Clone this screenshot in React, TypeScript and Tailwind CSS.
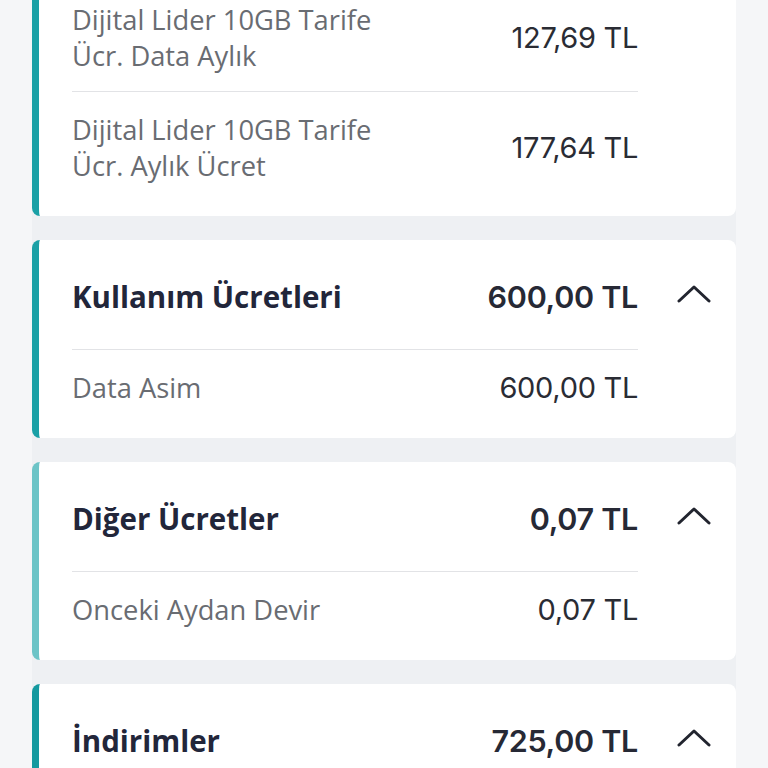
const sections = [
  {
    title: '',
    total: '',
    accent: 'border-[#1aa0a6]',
    items: [
      { label: ['Dijital Lider 10GB Tarife', 'Ücr. Data Aylık'], value: '127,69 TL' },
      { label: ['Dijital Lider 10GB Tarife', 'Ücr. Aylık Ücret'], value: '177,64 TL' },
    ],
  },
  {
    title: 'Kullanım Ücretleri',
    total: '600,00 TL',
    accent: 'border-[#1aa0a6]',
    items: [{ label: ['Data Asim'], value: '600,00 TL' }],
  },
  {
    title: 'Diğer Ücretler',
    total: '0,07 TL',
    accent: 'border-[#6cc4c7]',
    items: [{ label: ['Onceki Aydan Devir'], value: '0,07 TL' }],
  },
  {
    title: 'İndirimler',
    total: '725,00 TL',
    accent: 'border-[#14999f]',
    items: [],
  },
];

function ChevronUp() {
  return (
    <svg width="34" height="20" viewBox="0 0 34 20" fill="none">
      <polyline
        points="2,17 17,3 32,17"
        stroke="#22252f"
        strokeWidth="3"
        strokeLinecap="round"
        strokeLinejoin="round"
      />
    </svg>
  );
}

export default function App() {
  return (
    <div className="h-screen bg-[#f5f6f8] overflow-hidden">
      <div className="mx-[32px] bg-[#eef0f3] flex flex-col gap-[24px] mt-[-18px]">
        {sections.map((s, i) => (
          <div
            key={i}
            className={`bg-white rounded-[8px] border-l-[7px] ${s.accent} pb-[15px]`}
          >
            {s.title && (
              <div className="flex items-center pl-[33px] pt-[37px] pb-[32px]">
                <div className="flex w-[566px] items-center justify-between">
                  <span className="font-['Open_Sans',sans-serif] font-bold text-[29.5px] leading-[40px] text-[#22263a]">
                    {s.title}
                  </span>
                  <span className="font-['Inter',sans-serif] font-semibold text-[30.5px] leading-[40px] tracking-[-0.3px] text-[#262935]">
                    {s.total}
                  </span>
                </div>
                <div className="pl-[39px] pb-[6px]">
                  <ChevronUp />
                </div>
              </div>
            )}
            <div className="pl-[33px]">
              {s.items.map((it, j) => (
                <div
                  key={j}
                  className={`w-[566px] flex items-center justify-between pt-[20px] pb-[17px] ${
                    j > 0 || s.title ? 'border-t border-[#e2e3e6]' : ''
                  }`}
                >
                  <span className="font-['Open_Sans',sans-serif] text-[27.3px] leading-[36px] text-[#696c72]">
                    {it.label.map((l, k) => (
                      <span key={k} className="block">
                        {l}
                      </span>
                    ))}
                  </span>
                  <span className="font-['Inter',sans-serif] text-[29px] leading-[36px] tracking-[-0.3px] text-[#2a2c34]">
                    {it.value}
                  </span>
                </div>
              ))}
            </div>
          </div>
        ))}
      </div>
    </div>
  );
}
